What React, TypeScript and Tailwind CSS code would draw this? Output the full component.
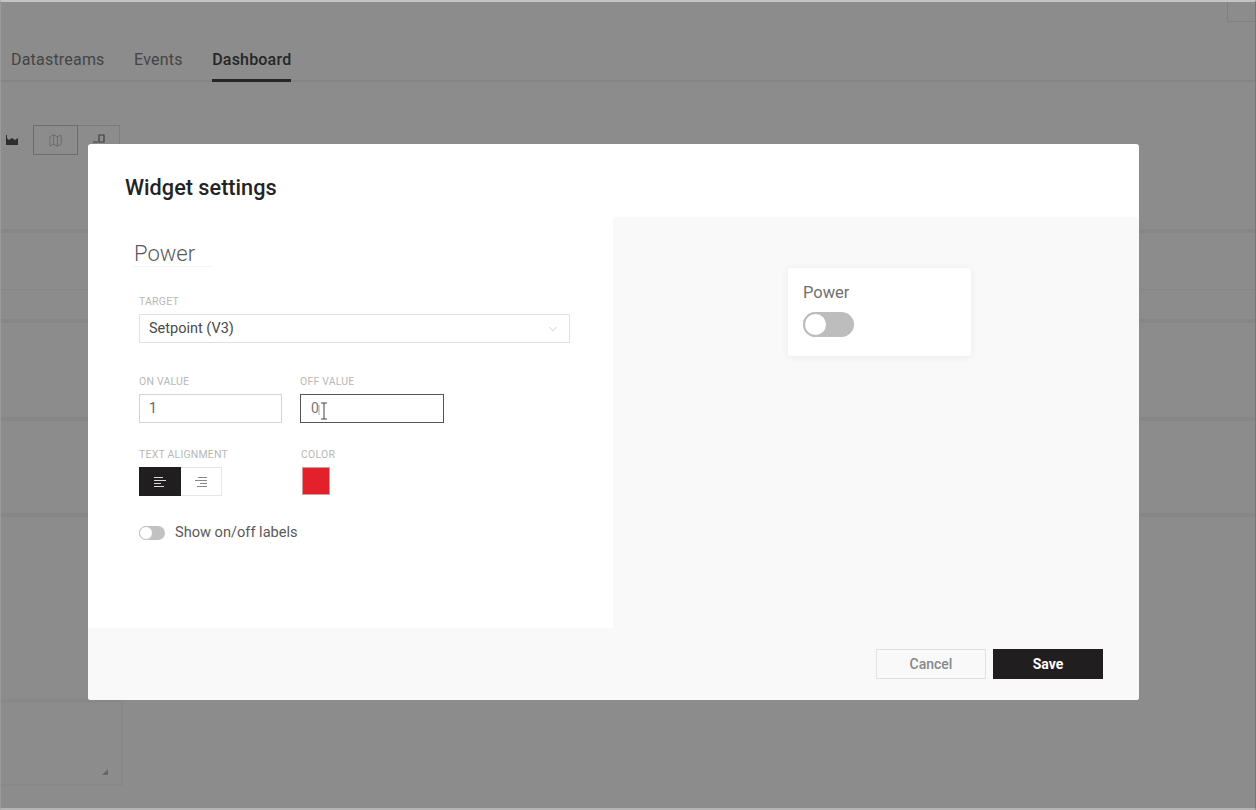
import React from "react";
import { ChevronDown, Map } from "lucide-react";

const fieldLabel = "block text-[10.5px] leading-3 tracking-[0.2px] text-[#b8b8b8] uppercase";

const AlignIcon: React.FC<{ right?: boolean; color: string }> = ({ right, color }) => (
    <svg width="14" height="12" viewBox="0 0 14 12" fill="none" stroke={color} strokeWidth="1">
        {right ? (
            <path d="M4 1.5h9M1 4.5h12M6 7.5h7M3 10.5h10" />
        ) : (
            <path d="M1 1.5h9M1 4.5h12M1 7.5h7M1 10.5h10" />
        )}
    </svg>
);

const App: React.FC = () => {
    return (
        <div className="relative w-[1256px] h-[810px] overflow-hidden bg-[#8c8c8c] border-t-2 border-b-2 border-l border-r border-t-[#c4c4c4] border-b-[#b4b4b4] border-l-[#9a9a9a] border-r-[#777777] font-['Roboto',sans-serif]">
            {/* page behind the overlay */}
            <div className="flex justify-end h-[20px]">
                <div className="w-[28px] h-[20px] border-l border-b border-[#808080]" />
            </div>
            <div className="flex items-start gap-[29px] h-[60px] pl-[10px] pt-[28px] border-b-2 border-[#858585]">
                <div className="text-[16px] leading-5 tracking-[0.2px] text-[#444444]">Datastreams</div>
                <div className="ml-[0.5px] text-[16px] leading-5 tracking-[0.2px] text-[#444444]">Events</div>
                <div className="ml-[0.5px] h-[32px] border-b-[3px] border-[#262626] text-[16px] leading-5 tracking-[0.2px] font-medium text-[#262626]">
                    Dashboard
                </div>
            </div>
            <div className="flex h-[30px] mt-[43px]">
                <div className="flex items-center justify-start pl-[4px] w-[32px] h-[30px]">
                    <svg width="14" height="10" viewBox="0 0 14 10" fill="#2e2e2e">
                        <path d="M1 0v10h12V3L10 5 7 3 4 5 2 3V0z" />
                    </svg>
                </div>
                <div className="flex items-center justify-center w-[45px] h-[30px] border border-[#6c6c6c]">
                    <Map size={15} strokeWidth={1} color="#5a5a5a" />
                </div>
                <div className="flex items-start justify-center pt-[7px] w-[42px] h-[30px] border-t border-r border-[#7c7c7c]">
                    <svg width="14" height="12" viewBox="0 0 14 12" fill="none" stroke="#3f3f3f" strokeWidth="1.2">
                        <path d="M1 9h5M7 9V2h5v7z" />
                    </svg>
                </div>
            </div>
            <div className="mt-[74px] h-[60px] border-t-4 border-[#868686]" />
            <div className="h-[30px] border-t border-[#868686]" />
            <div className="h-[98px] border-t-4 border-[#868686]" />
            <div className="h-[96px] border-t-4 border-[#868686]" />
            <div className="h-[186px] border-t-4 border-[#868686]" />
            <div className="relative w-[122px] h-[87px] border-t-4 border-r-2 border-b-2 border-[#888888]">
                <svg className="absolute right-[12px] bottom-[8px]" width="8" height="8" viewBox="0 0 8 8" fill="#666666">
                    <path d="M7 1v6H1z" />
                </svg>
            </div>

            {/* modal */}
            <div className="absolute left-[87px] top-[142px] w-[1051px] h-[556px] flex flex-col rounded-[3px] bg-white overflow-hidden">
                <div className="h-[73px] pl-[37px] pt-[32px] text-[21.7px] leading-6 font-medium text-[#232323]">
                    Widget settings
                </div>
                <div className="flex h-[411px]">
                    <div className="w-[525px] pl-[51px] pt-[24px]">
                        <div className="w-[80px] -ml-[6px] pl-[1px] h-[26px] border-b border-[#f4f4f4] text-[22px] leading-[26px] font-light text-[#5a5a5a]">
                            Power
                        </div>
                        <label className={`${fieldLabel} mt-[29px]`}>Target</label>
                        <div className="flex items-center justify-between w-[431px] h-[29px] mt-[6px] px-[9px] border border-[#e2e2e2] text-[14.5px] text-[#4a4a4a]">
                            Setpoint (V3)
                            <ChevronDown size={14} strokeWidth={1} color="#b0b0b0" />
                        </div>
                        <div className="flex gap-[18px] mt-[33px]">
                            <div>
                                <label className={fieldLabel}>On value</label>
                                <div className="flex items-center w-[143px] h-[29px] mt-[6px] px-[9px] border border-[#d4d4d4] text-[14px] text-[#666666]">
                                    1
                                </div>
                            </div>
                            <div>
                                <label className={fieldLabel}>Off value</label>
                                <div className="relative flex items-center w-[144px] h-[29px] mt-[6px] px-[10px] border border-[#555555] text-[14px] text-[#777777]">
                                    0
                                    <svg className="absolute left-[17px] top-[7px]" width="10" height="19" viewBox="0 0 10 19" fill="none" stroke="#444444" strokeWidth="1">
                                        <path d="M1 3v10" stroke="#aaaaaa" />
                                        <path d="M3 1h6M6 1v16M3 17h6" />
                                    </svg>
                                </div>
                            </div>
                        </div>
                        <div className="flex gap-[19px] mt-[26px]">
                            <div className="w-[143px]">
                                <label className={fieldLabel}>Text alignment</label>
                                <div className="flex mt-[6px] h-[29px]">
                                    <div className="flex items-center justify-center w-[42px] bg-[#211e1f]">
                                        <AlignIcon color="#d8d8d8" />
                                    </div>
                                    <div className="flex items-center justify-center w-[41px] border border-l-0 border-[#e6e6e6]">
                                        <AlignIcon right color="#888888" />
                                    </div>
                                </div>
                            </div>
                            <div>
                                <label className={fieldLabel}>Color</label>
                                <div className="w-[28px] h-[28px] mt-[6px] ml-[1px] bg-[#e4202a] border border-[#c9a0a0]" />
                            </div>
                        </div>
                        <div className="flex items-center gap-[10px] mt-[28px] h-[18px]">
                            <div className="relative w-[26px] h-[14px] rounded-full bg-[#c2c2c2]">
                                <div className="absolute left-0 top-0 w-[14px] h-[14px] rounded-full bg-white border border-[#c2c2c2]" />
                            </div>
                            <div className="text-[14.6px] text-[#5a5a5a]">Show on/off labels</div>
                        </div>
                    </div>
                    <div className="flex-1 bg-[#f9f9f9] pl-[175px] pt-[51px]">
                        <div className="w-[183px] h-[88px] px-[15px] pt-[15px] rounded-[3px] bg-white shadow-[0_1px_8px_rgba(0,0,0,0.06)]">
                            <div className="text-[16.5px] leading-5 text-[#707070]">Power</div>
                            <div className="relative w-[51px] h-[25px] mt-[9px] rounded-full bg-[#bdbdbd]">
                                <div className="absolute left-0 top-0 w-[25px] h-[25px] rounded-full bg-white border-2 border-[#bdbdbd]" />
                            </div>
                        </div>
                    </div>
                </div>
                <div className="flex-1 flex justify-end items-start gap-[7px] bg-[#f9f9f9] pr-[36px] pt-[21px]">
                    <button className="w-[110px] h-[30px] border border-[#e2e2e2] text-[14px] font-medium text-[#888888]">Cancel</button>
                    <button className="w-[110px] h-[30px] bg-[#211e1f] text-[14px] font-bold text-white">Save</button>
                </div>
            </div>
        </div>
    );
};

export default App;
